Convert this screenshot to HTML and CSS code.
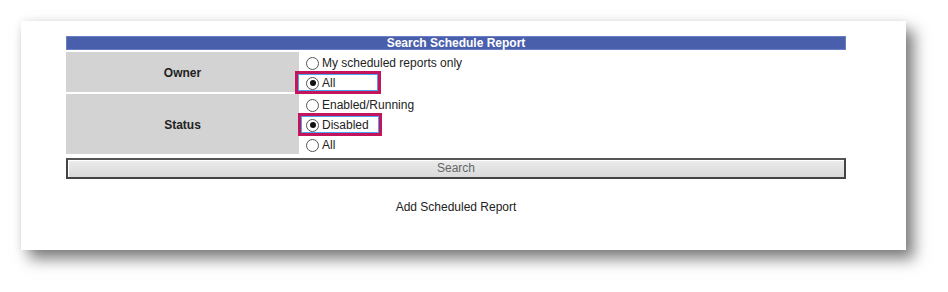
FILE: index.html
```html
<!DOCTYPE html>
<html lang="en">
<head>
    <meta charset="UTF-8">
    <title>Search Schedule Report</title>
    <link rel="stylesheet" href="styles.css">
</head>
<body>
    <div class="page">
        <div class="card">
            <div class="report">
                <div class="report-head">Search Schedule Report</div>

                <div class="report-row">
                    <div class="report-label">Owner</div>
                    <div class="report-options">
                        <label class="option"><span class="radio"></span>My scheduled reports only</label>
                        <label class="option"><span class="radio checked"></span>All</label>
                        <span class="mark mark-owner"></span>
                    </div>
                </div>

                <div class="report-row">
                    <div class="report-label">Status</div>
                    <div class="report-options">
                        <label class="option"><span class="radio"></span>Enabled/Running</label>
                        <label class="option"><span class="radio checked"></span>Disabled</label>
                        <label class="option"><span class="radio"></span>All</label>
                        <span class="mark mark-status"></span>
                    </div>
                </div>

                <div class="search-btn">Search</div>
            </div>

            <p class="add-link">Add Scheduled Report</p>
        </div>
    </div>
</body>
</html>
```

FILE: styles.css
```css
*{
    margin: 0;
    padding: 0;
    box-sizing: border-box;
}

body{
    font-family: "Liberation Sans", Arial, sans-serif;
    font-size: 12px;
    color: #222;
    background: #fff;
}

.page{
    width: 948px;
    height: 292px;
    padding: 21px 0 0 21px;
}

.card{
    width: 885px;
    height: 229px;
    background: #fff;
    padding: 15px 0 0 45px;
    box-shadow: 8px 9px 14px rgba(0, 0, 0, .5), 0 0 8px rgba(0, 0, 0, .08);
}

.report{
    width: 780px;
    display: flex;
    flex-direction: column;
    gap: 2px;
}

.report-head{
    height: 14px;
    line-height: 12px;
    background: #4a5fab;
    border: 1px solid #6b7fc4;
    color: #fff;
    font-weight: bold;
    text-align: center;
    font-size: 12px;
}

.report-row{
    display: flex;
    gap: 2px;
}

.report-label{
    width: 233px;
    background: #d3d3d4;
    font-weight: bold;
    display: flex;
    align-items: center;
    justify-content: center;
    padding-top: 1px;
}

.report-options{
    position: relative;
    flex: 1;
    padding-left: 4px;
}

.option{
    display: flex;
    align-items: center;
    height: 20px;
    padding-top: 2px;
    color: #222;
}

.radio{
    width: 13px;
    height: 13px;
    border: 1px solid #555;
    border-radius: 50%;
    background: #fff;
    margin: 0 3px 0 1px;
    position: relative;
}

.radio.checked::after{
    content: "";
    position: absolute;
    left: 2.5px;
    top: 2.5px;
    width: 6px;
    height: 6px;
    border-radius: 50%;
    background: #111;
}

/* red annotation boxes drawn over the screenshot */
.mark{
    position: absolute;
    border: 3px solid #c4145c;
    box-shadow: inset 0 0 0 1px #4aa3f0;
}

.mark-owner{
    left: -6px;
    top: 19px;
    width: 86px;
    height: 23px;
}

.mark-status{
    left: -3px;
    top: 19px;
    width: 84px;
    height: 23px;
}

.search-btn{
    margin-top: 2px;
    height: 21px;
    line-height: 17px;
    text-align: center;
    color: #666;
    background: linear-gradient(#ececec, #d9d9d9);
    border: 2px solid #444;
    border-top-color: #555;
    box-shadow: inset 1px 1px 0 #fff;
}

.add-link{
    width: 780px;
    text-align: center;
    margin-top: 21px;
    color: #222;
}
```
